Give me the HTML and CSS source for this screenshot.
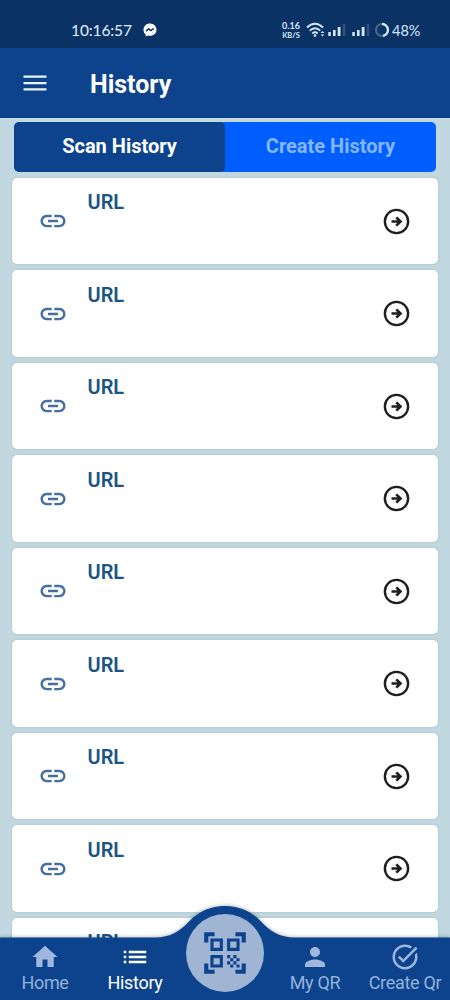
FILE: index.html
```
<!DOCTYPE html>
<html lang="en">
<head>
<meta charset="utf-8">
<title>History</title>
<link rel="stylesheet" href="styles.css">
</head>
<body>
<svg class="defs" width="0" height="0">
  <symbol id="link" viewBox="0 0 24 24"><path d="M3.9 12c0-1.71 1.39-3.1 3.1-3.1h4V7H7c-2.76 0-5 2.24-5 5s2.24 5 5 5h4v-1.9H7c-1.71 0-3.1-1.39-3.1-3.1zM8 13h8v-2H8v2zm9-6h-4v1.9h4c1.71 0 3.1 1.39 3.1 3.1s-1.39 3.1-3.1 3.1h-4V17h4c2.76 0 5-2.24 5-5s-2.24-5-5-5z"/></symbol>
  <symbol id="go" viewBox="0 0 26 26"><circle cx="13" cy="13" r="11.2" fill="none" stroke="currentColor" stroke-width="2.3"/><path d="M8.200 13h8.500M12.800 9l4 4-4 4" fill="none" stroke="currentColor" stroke-width="2.600"/></symbol>
</svg>
<div class="phone">
  <header class="status">
    <span class="clock">10:16:57</span>
    <svg class="messenger" viewBox="0 0 14 14"><path fill="#fff" d="M7 .5C3.2.5.5 3.200.5 6.700c0 2 .8 3.600 2.200 4.700v2.100l2-1.100c.7.2 1.500.3 2.300.3 3.800 0 6.500-2.600 6.500-6S10.800.5 7 .5z"/><path d="M3.100 8.300l2.500-2.500 2.300 1.700 2.800-2.100" fill="none" stroke="#0a3265" stroke-width="1.500"/></svg>
    <span class="speed"><b>0.16</b><b class="unit">KB/S</b></span>
    <svg class="wifi" viewBox="0 0 20 16"><g fill="none" stroke="#d5e8fa" stroke-width="1.900"><path d="M1 5.500Q9 -1.900 17 5.500"/><path d="M3.700 8.600Q9 3.900 14.300 8.600"/><path d="M6.300 11.500Q9 9.200 11.700 11.500"/></g><circle cx="9" cy="13.600" r="1.300" fill="#d5e8fa"/><path d="M14.600 11.100l1.900-2 1.900 2zM14.600 12.600h3.800l-1.900 2z" fill="#d5e8fa"/></svg>
    <svg class="signal" viewBox="0 0 18 14"><path d="M.3 9h2.500v4H.3zM5 7h2.600v6H5zM9.700 4h2.800v9H9.700z" fill="#d5e8fa"/><path d="M14.800 1h2.500v12h-2.500z" fill="#31527f"/></svg>
    <svg class="signal second" viewBox="0 0 18 14"><path d="M.3 9h2.500v4H.3zM5 7h2.600v6H5zM9.700 4h2.800v9H9.700z" fill="#d5e8fa"/><path d="M14.800 1h2.500v12h-2.500z" fill="#31527f"/></svg>
    <svg class="ring" viewBox="0 0 16 16"><circle cx="8" cy="8" r="6" fill="none" stroke="#47658e" stroke-width="2.200"/><path d="M8 2a6 6 0 0 1 1 11.900" fill="none" stroke="#d5e8fa" stroke-width="2.400"/></svg>
    <span class="battery">48%</span>
  </header>
  <div class="appbar">
    <svg class="menu" viewBox="0 0 24 16"><path d="M.5 .5h23v2.300H.5zM.5 6.900h23v2.300H.5zM.5 13.200h23v2.300H.5z" fill="#e8f6ff"/></svg>
    <h1>History</h1>
  </div>
  <main class="content">
    <div class="tabs"><div class="tab active">Scan History</div><div class="tab">Create History</div></div>
    <div class="list">
      <div class="card"><svg class="link"><use href="#link"/></svg><span class="kind">URL</span><svg class="go"><use href="#go"/></svg></div>
      <div class="card"><svg class="link"><use href="#link"/></svg><span class="kind">URL</span><svg class="go"><use href="#go"/></svg></div>
      <div class="card"><svg class="link"><use href="#link"/></svg><span class="kind">URL</span><svg class="go"><use href="#go"/></svg></div>
      <div class="card"><svg class="link"><use href="#link"/></svg><span class="kind">URL</span><svg class="go"><use href="#go"/></svg></div>
      <div class="card"><svg class="link"><use href="#link"/></svg><span class="kind">URL</span><svg class="go"><use href="#go"/></svg></div>
      <div class="card"><svg class="link"><use href="#link"/></svg><span class="kind">URL</span><svg class="go"><use href="#go"/></svg></div>
      <div class="card"><svg class="link"><use href="#link"/></svg><span class="kind">URL</span><svg class="go"><use href="#go"/></svg></div>
      <div class="card"><svg class="link"><use href="#link"/></svg><span class="kind">URL</span><svg class="go"><use href="#go"/></svg></div>
      <div class="card"><svg class="link"><use href="#link"/></svg><span class="kind">URL</span><svg class="go"><use href="#go"/></svg></div>
    </div>
  </main>
  <nav class="nav">
    <svg class="nav-shape" viewBox="0 0 450 94"><path d="M0 31.500H155C171 31.500 180 25 189 15.500C199 5 211 0 225 0S251 5 261 15.500C270 25 279 31.500 295 31.500H450V94H0z" fill="#0d438c"/></svg>
    <div class="nav-items">
      <div class="item"><svg viewBox="0 0 24 24"><path d="M10 20v-6h4v6h5v-8h3L12 3 2 12h3v8z"/></svg><span>Home</span></div>
      <div class="item current"><svg viewBox="0 0 24 24"><path d="M3 13h2v-2H3v2zm0 4h2v-2H3v2zm0-8h2V7H3v2zm4 4h14v-2H7v2zm0 4h14v-2H7v2zM7 7v2h14V7H7z"/></svg><span>History</span></div>
      <div class="scan"><svg viewBox="0 0 24 24"><path d="M9.500 6.500v3h-3v-3h3M11 5H5v6h6V5zM9.500 14.500v3h-3v-3h3M11 13H5v6h6v-6zM17.500 6.500v3h-3v-3h3M19 5h-6v6h6V5zM13 13h1.500v1.500H13zM14.500 14.500H16V16h-1.500zM16 13h1.500v1.500H16zM13 16h1.500v1.500H13zM14.500 17.500H16V19h-1.500zM16 16h1.500v1.500H16zM17.500 14.500H19V16h-1.500zM17.500 17.500H19V19h-1.500zM22 7h-2V4h-3V2h5v5zM22 22v-5h-2v3h-3v2h5zM2 22h5v-2H4v-3H2v5zM2 2v5h2V4h3V2H2z"/></svg></div>
      <div class="item"><svg viewBox="0 0 24 24"><path d="M12 12c2.210 0 4-1.790 4-4s-1.790-4-4-4-4 1.790-4 4 1.790 4 4 4zm0 2c-2.670 0-8 1.340-8 4v2h16v-2c0-2.660-5.330-4-8-4z"/></svg><span>My QR</span></div>
      <div class="item"><svg viewBox="0 0 24 24"><path d="M22 5.180L10.590 16.600l-4.240-4.240 1.410-1.410 2.830 2.830 10-10L22 5.180zM19.790 10.220C19.920 10.790 20 11.390 20 12c0 4.420-3.580 8-8 8s-8-3.580-8-8 3.580-8 8-8c1.580 0 3.040.46 4.280 1.250l1.440-1.440C16.100 2.670 14.130 2 12 2 6.480 2 2 6.480 2 12s4.480 10 10 10 10-4.480 10-10c0-1.190-.22-2.330-.6-3.390l-1.610 1.610z"/></svg><span>Create Qr</span></div>
    </div>
  </nav>
</div>
</body>
</html>
```
FILE: styles.css
```
* { box-sizing: border-box; }
body { margin: 0; font-family: Roboto, sans-serif; }
svg { display: block; flex: none; }
.defs { position: absolute; }
.phone { position: relative; width: 450px; height: 1000px; overflow: hidden; background: #c1d8e0; display: flex; flex-direction: column; }
.status { height: 48px; flex: none; background: #0a3265; display: flex; align-items: center; padding: 12px 0 0 71px; color: #d5e8fa; font-family: Lato, sans-serif; }
.clock { width: 61px; font-size: 15.500px; letter-spacing: -.1px; line-height: 18px; color: #e3f1fd; white-space: nowrap; }
.messenger { width: 14px; height: 14px; margin-left: 11px; }
.speed { width: 20px; margin-left: 124px; display: flex; flex-direction: column; align-items: center; font-size: 9px; line-height: 10px; }
.speed b { font-weight: 700; }
.speed .unit { font-size: 7.500px; line-height: 9px; }
.wifi { width: 20px; height: 16px; margin-left: 5px; }
.signal { width: 18px; height: 14px; margin-left: 2px; }
.signal.second { margin-left: 6px; }
.ring { width: 16px; height: 16px; margin-left: 4px; }
.battery { margin-left: 2px; font-size: 14.500px; }
.appbar { height: 70px; flex: none; background: #0d438c; display: flex; align-items: center; padding-left: 23px; }
.menu { width: 24px; height: 16px; }
h1 { margin: 3px 0 0 43px; color: #fff; font-size: 25px; line-height: 28px; font-weight: 700; }
.content { flex: 1; min-height: 0; padding: 4px 12.500px 0 12px; overflow: hidden; }
.tabs { height: 49.500px; margin: 0 1.500px 0 2px; display: flex; border-radius: 5px; overflow: hidden; background: #005eff; }
.tab { flex: 1; display: flex; align-items: center; justify-content: center; padding-bottom: 2px; font-size: 20px; font-weight: 700; color: #83b6ff; }
.tab.active { background: #0d438c; color: #fff; border-radius: 5px; }
.list { padding-top: 6.300px; display: flex; flex-direction: column; gap: 6px; }
.card { height: 86.500px; flex: none; background: #fff; border-radius: 5px; box-shadow: 0 0 2px rgba(110,125,120,.4); display: flex; align-items: center; padding: 0 27.500px 0 26px; }
.link { width: 30px; height: 30px; fill: #47709f; }
.kind { align-self: flex-start; margin: 12.500px auto 0 19.500px; font-size: 20px; line-height: 24px; font-weight: 600; color: #1c5583; }
.go { width: 27px; height: 27px; color: #1e1e1f; }
.nav { position: absolute; left: 0; bottom: 0; width: 450px; height: 94px; }
.nav-shape { width: 450px; height: 94px; overflow: visible; filter: drop-shadow(0 0 2px rgba(0,20,50,.4)); }
.nav-items { position: absolute; inset: 0; display: grid; grid-template-columns: repeat(5, 90px); align-items: start; }
.item { padding-top: 36px; display: flex; flex-direction: column; align-items: center; color: #91b2db; fill: #9fb7dc; font-size: 18px; letter-spacing: -.3px; line-height: 22px; white-space: nowrap; }
.item svg { width: 30px; height: 30px; }
.item.current { color: #fff; fill: #fff; }
.scan { margin: 8px auto 0; width: 78px; height: 78px; border-radius: 50%; background: #a0b4d4; display: flex; align-items: center; justify-content: center; fill: #0d438c; }
.scan svg { width: 50px; height: 50px; }
```
